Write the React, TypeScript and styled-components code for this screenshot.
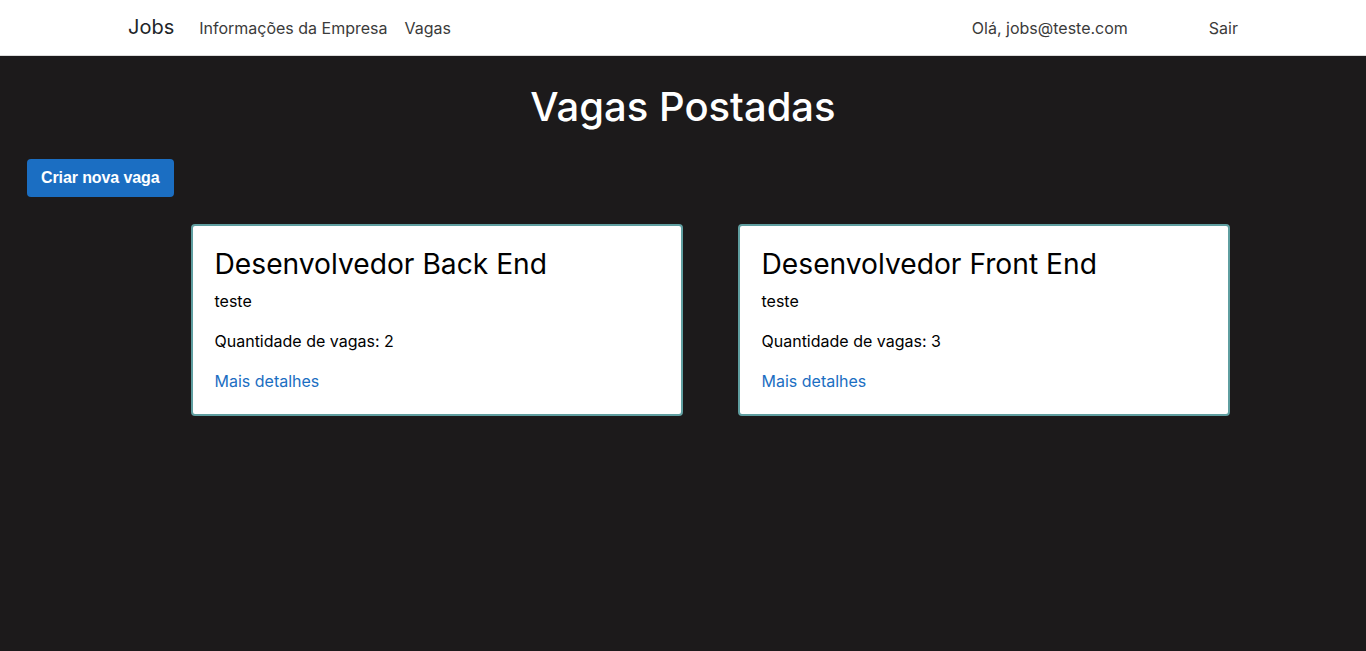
import React from 'react';
import styled, { createGlobalStyle } from "styled-components";

const GlobalStyle = createGlobalStyle`
  html, body {
    margin: 0;
    padding: 0;
    background: #1c1a1b;
    font-family: 'Inter', 'Noto Sans', sans-serif;
  }
`

type Vaga = { titulo: string; descricao: string; quantidade: number }

const vagas: Vaga[] = [
  { titulo: "Desenvolvedor Back End", descricao: "teste", quantidade: 2 },
  { titulo: "Desenvolvedor Front End", descricao: "teste", quantidade: 3 },
]

const App = () => {
  return (
    <>
      <GlobalStyle />
      <Navbar>
        <div className="left">
          <span className="brand">Jobs</span>
          <a className="link">Informações da Empresa</a>
          <a className="link">Vagas</a>
        </div>
        <div className="right">
          <span className="link">Olá, jobs@teste.com</span>
          <a className="link">Sair</a>
        </div>
      </Navbar>

      <Main>
        <Title>Vagas Postadas</Title>
        <Toolbar>
          <Button>Criar nova vaga</Button>
        </Toolbar>
        <CardList>
          {vagas.map((vaga) => (
            <Card key={vaga.titulo}>
              <h3>{vaga.titulo}</h3>
              <p className="desc">{vaga.descricao}</p>
              <p>Quantidade de vagas: {vaga.quantidade}</p>
              <a>Mais detalhes</a>
            </Card>
          ))}
        </CardList>
      </Main>
    </>
  )
}

export default App

const Navbar = styled.nav`
  display: flex;
  align-items: center;
  justify-content: space-between;
  height: 55px;
  padding: 0 128px;
  background: #ffffff;
  border-bottom: 1px solid #dcdcdc;
  .left, .right {
    display: flex;
    align-items: center;
  }
  .brand {
    font-size: 20px;
    color: #212529;
    margin-right: 25px;
    padding-bottom: 1px;
  }
  .left .link {
    font-size: 16px;
    color: #3b3b3b;
    margin-right: 17px;
  }
  .right .link {
    font-size: 16px;
    color: #3b3b3b;
    margin-left: 81px;
  }
  .right .link:first-child {
    margin-left: 0;
  }
`

const Main = styled.main`
  padding-top: 27px;
`

const Title = styled.h1`
  margin: 0;
  text-align: center;
  font-size: 40px;
  font-weight: 500;
  line-height: 48px;
  color: #ffffff;
`

const Toolbar = styled.div`
  display: flex;
  padding: 28px 27px 0;
`

const Button = styled.button`
  height: 38px;
  padding: 0 14px;
  border: none;
  border-radius: 4px;
  background: #1b6ec2;
  color: #ffffff;
  font-family: 'Liberation Sans', Arial, sans-serif;
  font-weight: 700;
  font-size: 16px;
  letter-spacing: -0.1px;
  cursor: pointer;
`

const CardList = styled.section`
  display: flex;
  justify-content: center;
  gap: 55px;
  padding: 27px 0 0 54px;
`

const Card = styled.div`
  box-sizing: border-box;
  width: 492px;
  height: 192px;
  border: 2px solid #5f9ea0;
  border-radius: 4px;
  background: #ffffff;
  padding: 21px 22px 0;
  color: #000000;
  h3 {
    margin: 0 0 8px;
    font-size: 28.2px;
    font-weight: 400;
    line-height: 34px;
  }
  p {
    margin: 0 0 16px;
    font-size: 16px;
    line-height: 24px;
  }
  a {
    font-size: 16px;
    line-height: 24px;
    color: #1b6ec2;
    cursor: pointer;
  }
`
